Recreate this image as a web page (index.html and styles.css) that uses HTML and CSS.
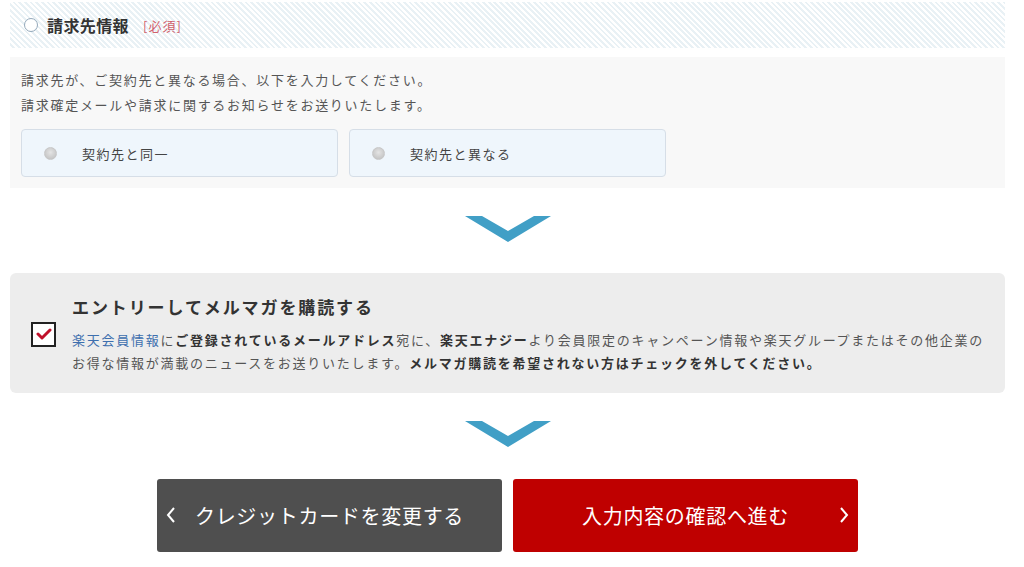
FILE: index.html
```html
<!DOCTYPE html>
<html lang="ja">
<head>
<meta charset="utf-8">
<title>請求先情報</title>
<link rel="stylesheet" href="styles.css">
</head>
<body>
<div class="page">
  <div class="sec-head">
    <span class="ring"></span>
    <h2 class="sec-title">請求先情報</h2>
    <span class="req">[必須]</span>
  </div>
  <div class="sec-body">
    <p class="note">請求先が、ご契約先と異なる場合、以下を入力してください。</p>
    <p class="note">請求確定メールや請求に関するお知らせをお送りいたします。</p>
    <div class="options">
      <label class="opt"><span class="radio"></span><span class="opt-label">契約先と同一</span></label>
      <label class="opt"><span class="radio"></span><span class="opt-label">契約先と異なる</span></label>
    </div>
  </div>

  <div class="chev chev-1">
    <svg width="86" height="28" viewBox="0 0 86 28"><polygon points="0,1 17,1 43,16 69,1 86,1 43,27" fill="#419fc6"/></svg>
  </div>

  <div class="mail">
    <div class="check">
      <svg width="16" height="12" viewBox="0 0 16 12"><polyline points="2,6 6,10 14,2" fill="none" stroke="#c0102a" stroke-width="3" stroke-linecap="round" stroke-linejoin="round"/></svg>
    </div>
    <div class="mail-text">
      <h3 class="mail-title">エントリーしてメルマガを購読する</h3>
      <p class="mail-desc"><span class="link">楽天会員情報</span>に<b>ご登録されているメールアドレス</b>宛に、<b>楽天エナジー</b>より会員限定のキャンペーン情報や楽天グループまたはその他企業の<br>お得な情報が満載のニュースをお送りいたします。<b>メルマガ購読を希望されない方はチェックを外してください。</b></p>
    </div>
  </div>

  <div class="chev chev-2">
    <svg width="86" height="28" viewBox="0 0 86 28"><polygon points="0,1 17,1 43,16 69,1 86,1 43,27" fill="#419fc6"/></svg>
  </div>

  <div class="buttons">
    <a class="btn btn-back">
      <svg class="arr arr-l" width="10" height="16" viewBox="0 0 10 16"><polyline points="8,1 2,8 8,15" fill="none" stroke="#fff" stroke-width="2"/></svg>
      クレジットカードを変更する
    </a>
    <a class="btn btn-next">
      入力内容の確認へ進む
      <svg class="arr arr-r" width="10" height="16" viewBox="0 0 10 16"><polyline points="2,1 8,8 2,15" fill="none" stroke="#fff" stroke-width="2"/></svg>
    </a>
  </div>
</div>
</body>
</html>
```

FILE: styles.css
```css
* { box-sizing: border-box; }
html, body { margin: 0; padding: 0; background: #fff; }
body {
  font-family: "Noto Sans CJK JP", "Noto Sans", sans-serif;
  color: #555;
}
.page {
  width: 995px;
  margin-left: 10px;
  padding-top: 2px;
}
.sec-head {
  height: 46px;
  display: flex;
  align-items: center;
  padding-left: 14px;
  background: repeating-linear-gradient(45deg, #ffffff 0 2px, #e9f1f5 2px 4px);
}
.ring {
  flex: none;
  width: 14px;
  height: 14px;
  border: 1px solid #94a9bb;
  border-radius: 50%;
  background: #fff;
  margin-right: 9px;
}
.sec-title {
  margin: 0;
  font-size: 16px;
  font-weight: 700;
  color: #333;
  letter-spacing: 0.4px;
}
.req {
  margin-left: 14px;
  font-size: 13px;
  letter-spacing: 1px;
  color: #d0606c;
}
.sec-body {
  margin-top: 9px;
  background: #f8f8f8;
  padding: 10px 11px 11px;
}
.note {
  margin: 0;
  font-size: 13px;
  line-height: 25px;
  letter-spacing: 1.72px;
  color: #555;
}
.options {
  display: flex;
  gap: 11px;
  margin-top: 12px;
}
.opt {
  width: 317px;
  height: 48px;
  display: flex;
  align-items: center;
  padding-left: 22px;
  background: #eff6fc;
  border: 1px solid #d6dee7;
  border-radius: 4px;
}
.radio {
  flex: none;
  width: 13px;
  height: 13px;
  border-radius: 50%;
  background: radial-gradient(circle at 50% 40%, #e4e4e4 0, #c8c8c8 70%, #b4b4b4 100%);
  border: 1px solid #c8c8c8;
}
.opt-label {
  margin-left: 25px;
  font-size: 13px;
  letter-spacing: 1.5px;
  color: #444;
}
.chev {
  display: flex;
  justify-content: center;
}
.chev-1 { margin-top: 27px; height: 28px; }
.chev-2 { margin-top: 27px; height: 28px; }
.mail {
  margin-top: 30px;
  background: #ededed;
  border-radius: 6px;
  display: flex;
  align-items: center;
  padding: 21px 20px 19px 21px;
}
.check {
  width: 25px;
  height: 25px;
  flex: none;
  border: 2px solid #222;
  background: #fff;
  display: flex;
  align-items: center;
  justify-content: center;
  margin-right: 16px;
}
.mail-title {
  margin: 0 0 8px;
  font-size: 17px;
  font-weight: 700;
  line-height: 26px;
  color: #333;
  letter-spacing: 1.9px;
}
.mail-desc {
  margin: 0;
  font-size: 13px;
  line-height: 23px;
  letter-spacing: 1.75px;
  color: #555;
}
.mail-desc b { color: #333; font-weight: 700; }
.link { color: #3d6fae; }
.buttons {
  margin-top: 31px;
  display: flex;
  justify-content: center;
  gap: 11px;
}
.btn {
  position: relative;
  width: 345px;
  height: 73px;
  border-radius: 3px;
  display: flex;
  align-items: center;
  justify-content: center;
  color: #fff;
  font-size: 20px;
  letter-spacing: 0.7px;
}
.btn-back { background: #4f4f4f; }
.btn-next { background: #bf0000; }
.arr { position: absolute; top: 28px; }
.arr-l { left: 9px; }
.arr-r { right: 9px; }
```
